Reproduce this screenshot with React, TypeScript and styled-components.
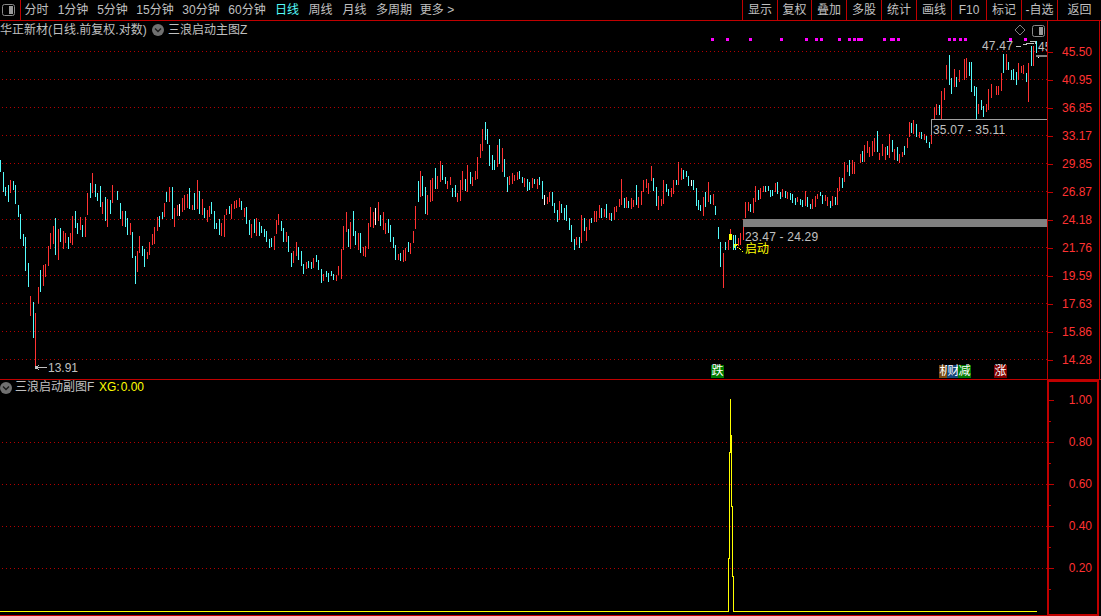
import React from 'react';
import styled, { createGlobalStyle } from 'styled-components';

const RED_LINE = '#c00000';
const GREY_TEXT = '#c0c0c0';
const FONT = '"Liberation Sans", "Noto Sans CJK SC", sans-serif';

const Global = createGlobalStyle`
  html, body { margin: 0; padding: 0; background: #000; }
  body { font-family: ${FONT}; font-size: 12px; color: ${GREY_TEXT}; }
`;

const Page = styled.div`
  width: 1101px;
  height: 616px;
  background: #000;
  display: flex;
  flex-direction: column;
  overflow: hidden;
`;

const Toolbar = styled.div`
  height: 20px;
  flex: none;
  display: flex;
  align-items: stretch;
  border-bottom: 1px solid ${RED_LINE};
`;

const ToggleSlot = styled.div`
  width: 21px;
  flex: none;
  display: flex;
  align-items: center;
  padding-left: 2px;
  box-sizing: border-box;
  border-right: 1px solid ${RED_LINE};
`;

const Tab = styled.div<{ $w: number; $active?: boolean }>`
  width: ${p => p.$w}px;
  flex: none;
  text-align: center;
  line-height: 20px;
  white-space: nowrap;
  color: ${p => (p.$active ? '#54fcfc' : GREY_TEXT)};
`;

const Spacer = styled.div`
  flex: 1;
`;

const ToolButton = styled.div<{ $w: number }>`
  width: ${p => p.$w}px;
  flex: none;
  box-sizing: border-box;
  border-left: 1px solid ${RED_LINE};
  text-align: center;
  line-height: 20px;
  white-space: nowrap;
`;

const Panel = styled.div`
  display: flex;
  height: 359px;
  flex: none;
  padding-right: 1px;
  border-bottom: 1px solid ${RED_LINE};
  box-sizing: border-box;
`;

const SubPanel = styled.div`
  display: flex;
  flex: 1;
  padding-right: 2px;
  min-height: 0;
`;

const Plot = styled.div`
  position: relative;
  width: 1047px;
  flex: none;
  overflow: hidden;
`;

const SubPlot = styled(Plot)`
  border-bottom: 1px solid ${RED_LINE};
`;

const Canvas = styled.svg`
  position: absolute;
  left: 0;
  top: 0;
  display: block;
`;

const Legend = styled.div`
  position: relative;
  display: flex;
  align-items: center;
  height: 18px;
  white-space: nowrap;
  line-height: 18px;
`;

const SubLegend = styled(Legend)`
  height: 15px;
  line-height: 15px;
`;

const StockName = styled.span`
  width: 152px;
`;

const IndicatorName = styled.span`
  margin-left: 4px;
`;

const SubName = styled.span`
  margin-left: 3px;
  width: 84px;
`;

const Value = styled.span`
  color: #ffff00;
  margin-right: 1px;
`;

const PriceAxis = styled.div`
  width: 53px;
  flex: none;
  box-sizing: border-box;
  border-left: 1px solid ${RED_LINE};
  border-right: 1px solid ${RED_LINE};
  padding: 24px 7px 0 0;
`;

const SubAxis = styled.div`
  width: 52px;
  flex: none;
  box-sizing: border-box;
  border: 2px solid ${RED_LINE};
  padding: 11px 5px 0 0;
`;

const PriceTick = styled.div`
  position: relative;
  height: 28px;
  line-height: 14px;
  text-align: right;
  color: #ff3232;
  &::before {
    content: '';
    position: absolute;
    left: 0;
    top: 7px;
    width: 5px;
    height: 1px;
    background: ${RED_LINE};
  }
`;

const SubTick = styled(PriceTick)`
  height: 42px;
  &::after {
    content: '';
    position: absolute;
    left: 0;
    top: 28px;
    width: 2px;
    height: 1px;
    background: ${RED_LINE};
  }
`;

const Marker = styled.div<{ $x: number; $bg: string }>`
  position: absolute;
  left: ${p => p.$x}px;
  top: 344px;
  width: 13px;
  height: 13px;
  background: ${p => p.$bg};
  color: #fff;
  font-size: 12px;
  line-height: 13px;
  text-align: center;
`;

const CornerIcon = styled.div`
  position: absolute;
  left: 1032px;
  top: 4px;
  display: flex;
`;

const PriceNote = styled.text<{ $color?: string; $spaced?: boolean }>`
  font-family: ${FONT};
  font-size: 12px;
  letter-spacing: ${p => (p.$spaced ? '0.2px' : '0')};
  fill: ${p => p.$color || GREY_TEXT};
`;

const PanelIcon = () => (
  <svg width="13" height="12" viewBox="0 0 13 12">
    <rect x="0.5" y="0.5" width="12" height="11" rx="2" fill="none" stroke="#8a8a8a" />
    <rect x="7" y="2" width="4" height="8" fill="#9a9a9a" />
  </svg>
);

const ChevronCircle = () => (
  <svg width="12" height="12" viewBox="0 0 12 12">
    <circle cx="6" cy="6" r="6" fill="#707070" />
    <path d="M3 4.6 L6 7.6 L9 4.6" fill="none" stroke="#1a1a1a" strokeWidth="1.4" />
  </svg>
);

type Bar = { x: number; t: number; b: number; c: string };
const COLORS: Record<string, string> = { c: '#54fcfc', r: '#ff3232', w: '#ffffff' };

const seg = (ox: number, oy: number, s: string): Bar[] =>
  s.trim().split(/\s+/).map(tok => {
    const m = tok.match(/^(\d+):(-?\d+)\/(-?\d+)([crw])$/)!;
    return {
      x: ox + Math.floor(+m[1] / 3),
      t: oy + Math.round(+m[2] / 3),
      b: oy + Math.round(+m[3] / 3),
      c: COLORS[m[4]],
    };
  });

const BARS: Bar[] = [
  ...seg(0, 150, `1:30/65c 10:65/125c 16:110/138c 25:105/155c 31:90/130r 40:92/120c 46:105/162c 55:165/200c 61:192/268c 70:252/288c 76:262/362c 85:340/412c 91:438/497r 100:456/563c 106:490/648r 115:412/461r 121:360/426c 130:345/407r 136:342/380r 145:288/348r 151:249/297r 160:228/282r 166:205/314c 175:238/330r 181:235/275c 190:244/296r 196:250/280r 205:262/297c 211:250/280r 217:198/285r 226:183/235c 232:220/252c 241:200/240r 247:225/261c 256:202/261r 262:130/194r 271:98/143c 277:70/130r 286:102/140c 292:128/152c 301:108/172c 307:155/192r 316:142/212c 322:148/230r 331:150/192c 337:105/160r 352:124/150c 361:160/206c 367:183/228r 376:183/232c 382:205/255c 391:220/255r 397:246/325c 406:318/401c 412:303/365r 418:258/310r 427:289/318c 433:298/351c 442:306/327r 448:277/316r 457:252/284r 463:232/282r 472:201/242r 478:198/230c 487:185/208c 493:160/200r 500:125/155c 508:112/155r 517:111/208c 523:175/230r 532:165/198r 538:163/197w 547:144/185r 553:135/180r 562:132/175r 568:115/176c 577:165/180r 583:130/180c 592:90/178r 598:124/193c 607:148/195r 613:174/204c 622:180/216r 628:168/200r 634:156/192c 643:183/236c 649:220/236c 658:208/256c 664:220/258r 673:195/260r 679:178/195r 688:168/192c 694:162/207r 703:152/176r 709:150/175r 718:143/172r`),
  ...seg(240, 110, `4:273/300c 13:294/320r 19:291/342c 28:330/375c 34:342/384r 43:327/369c 49:324/378r 58:336/378c 64:348/370c 73:357/381c 79:362/396c 88:387/414c 94:384/411c 103:378/420r 109:330/372r 115:312/345r 124:333/363c 130:354/396c 139:366/396r 145:378/426c 154:429/471c 160:423/459r 169:396/438r 175:411/450c 184:423/468c 190:462/492c 199:456/477r 205:453/474c 214:456/477c 220:444/474r 229:435/456c 235:450/480c 244:477/519c 250:492/513r 259:483/501c 265:489/516c 274:483/498c 280:492/510c 289:495/513r 295:468/495r 304:417/507r 310:348/420r 319:306/366r 325:357/411c 331:336/417r 340:303/378c 346:363/405c 355:369/420r 361:369/429c 370:411/438r 376:408/441r 385:339/417r 391:291/351r 400:306/354r 406:294/345w 415:276/333r 421:315/348c 430:306/360r 436:339/372r 445:327/369c 451:345/396c 460:381/414c 466:405/450c 475:432/450r 481:429/453c 490:420/456r 496:414/453r 505:396/426c 511:399/432r 520:363/399r 526:288/357r 535:213/276c 541:183/261r 547:198/258c 556:231/312c 562:255/315r 571:210/276r 577:204/273r 586:174/237c 592:198/237r 601:153/216r 607:165/210c 616:201/222c 622:213/237r 631:201/225r 637:234/261c 646:225/261c 652:249/276r 661:210/273r 667:183/240r 676:207/243c 682:165/246r 691:186/222c 697:201/228r 706:183/210r 712:141/207r`),
  ...seg(480, 110, `1:102/144r 7:57/123r 16:36/90c 22:57/102c 28:105/168c 37:135/180c 43:150/180c 52:105/171r 58:87/162c 67:114/186r 73:147/201c 82:201/246c 88:198/225r 97:189/222r 103:195/213r 112:186/210r 118:183/207c 127:201/219c 133:204/231r 142:207/243c 148:216/240c 157:204/234r 163:207/222c 172:207/237r 178:201/225c 187:213/267c 193:255/285w 202:261/282r 208:246/276r 217:246/288c 223:279/309c 232:300/336c 238:273/330r 244:282/309c 253:294/330c 259:285/333c 268:324/360c 274:345/396c 283:387/420c 289:381/405r 298:381/414c 304:315/399r 313:324/363c 319:351/393r 328:327/360r 334:324/339c 343:303/336r 349:303/336r 358:285/324r 364:294/324c 373:297/321r 379:282/324c 388:309/330r 394:309/333c 403:291/330r 409:288/306r 418:267/291r 424:207/285r 433:264/294c 439:261/294r 445:273/294c 454:264/297r 460:270/291r 469:225/285c 475:261/294r 484:243/285r 490:210/246r 499:207/234r 505:219/252r 514:168/213r 520:204/243c 529:231/288c 535:258/300r 544:267/288r 550:210/282r 559:222/246c 565:237/258c 574:234/261r 580:210/252r 589:210/225c 595:156/225r 604:174/210r 610:180/207c 619:183/201c 625:198/228c 634:210/228w 640:210/240c 649:234/288c 655:270/300c 661:285/303c 670:261/318r 676:246/291c 685:216/276r 691:255/282c 700:252/285r 706:288/315c 715:351/387c`),
  ...seg(680, 170, `121:216/291c 130:249/354r 136:216/240c 145:210/240r 151:177/210r 160:195/240c 166:195/240c 175:204/228r 181:189/225r 190:170/210r 196:96/144r 205:96/123r 211:102/126c 220:84/129r 226:48/96r 235:60/90c 241:54/87r 250:48/66r 256:48/66c 265:48/63c 271:60/81c 276:60/78c 285:39/66r 291:36/72c 300:66/87c 306:57/81r 316:63/84c 322:66/87r 331:69/90c 337:72/99c 346:84/105c 352:81/96r 361:87/105c 367:90/111c 376:63/108r 382:81/111c 391:102/117c 397:87/117r 406:78/111r 412:72/87r 421:66/78c 427:75/102c 436:75/93r 442:81/108r 451:93/114c 457:78/108r 466:81/105c 472:54/105r 478:21/63r 487:24/54c 493:-24/36r 502:-15/6r 508:-30/18c 517:-30/12r 523:-25/12r`),
  ...seg(860, 30, `0:372/400r 7:363/396c 13:345/396r 22:333/369r 28:351/381r 37:333/378r 43:324/366r 52:303/366c 58:369/390r 67:342/378r 76:351/390r 82:348/375c 88:312/384r 97:330/366c 103:357/390r 112:351/393c 118:372/399r 127:366/381r 133:348/375c 142:324/354r 148:276/321r 154:279/309c 160:270/312r 169:282/321c 178:306/324r 184:306/327c 193:312/330r 199:318/339c 208:336/354c 214:315/342r 223:232/267r 229:222/255r 238:225/255c 244:182/267r 253:175/210r 259:105/147r 268:75/165c 274:144/192c 283:117/171r 289:141/171c 298:120/156r 313:87/150r 319:84/144r 328:96/138c 334:96/186c 343:168/198c 349:171/267c 355:222/252r 364:210/240c 370:228/261c 379:222/246r 385:177/240r 394:162/204r 409:168/195r 415:168/195r 424:129/183r 430:72/129c 439:72/120r 445:96/120c 454:120/150c 460:117/150c 469:126/165c 475:99/150r 484:108/129r 490:105/132r 499:129/156c 505:99/216r 514:48/108c 520:48/108r 529:33/69c`),
];

const SQUARES: [number, number][] = [
  [711, 3], [726, 3], [749, 3], [780, 3], [805, 3], [815, 3], [820, 3], [838, 3], [848, 3], [853, 3],
  [857, 6], [883, 3], [890, 5], [897, 3], [948, 3], [953, 3], [959, 3], [964, 3], [1009, 3], [1024, 3],
];

const TABS: [string, number, boolean?][] = [
  ['分时', 31], ['1分钟', 42], ['5分钟', 37], ['15分钟', 48], ['30分钟', 44], ['60分钟', 48],
  ['日线', 32, true], ['周线', 35], ['月线', 33], ['多周期', 46], ['更多  >', 40],
];

const BUTTONS: [string, number][] = [
  ['显示', 35], ['复权', 34], ['叠加', 35], ['多股', 35], ['统计', 35], ['画线', 35],
  ['F10', 35], ['标记', 35], ['-自选', 36], ['返回', 44],
];

const PRICE_TICKS = ['45.50', '40.95', '36.85', '33.17', '29.85', '26.87', '24.18', '21.76', '19.59', '17.63', '15.86', '14.28'];
const SUB_TICKS = ['1.00', '0.80', '0.60', '0.40', '0.20'];
const SUB_GRID = [442, 484, 526, 568];

const GridLine = ({ y }: { y: number }) => (
  <line x1="2" x2="1047" y1={y + 0.5} y2={y + 0.5} stroke="#b40000" strokeDasharray="1 3" />
);

const MainChart = () => (
  <Canvas width="1047" height="358" viewBox="0 21 1047 358" shapeRendering="crispEdges">
    {PRICE_TICKS.map((_, i) => <GridLine key={i} y={51 + 28 * i} />)}
    {SQUARES.map(([x, w]) => <rect key={x} x={x} y="38" width={w} height="3" fill="#ff00ff" />)}
    {BARS.map((b, i) => <rect key={i} x={b.x} y={b.t} width="1" height={Math.max(1, b.b - b.t)} fill={b.c} />)}
    <rect x="743" y="219" width="304" height="8" fill="#808080" />
    <rect x="729" y="234" width="3" height="6" fill="#ffff00" />
    <PriceNote x="745" y="241" $spaced>23.47 - 24.29</PriceNote>
    <path d="M734.5 244 L743 252" stroke="#ffff00" strokeDasharray="1 1" fill="none" />
    <path d="M734 248 V244 H738" stroke="#ffff00" fill="none" />
    <PriceNote x="745" y="253" $color="#ffff00">启动</PriceNote>
    <rect x="931" y="119" width="116" height="1" fill="#a0a0a0" />
    <rect x="931" y="119" width="1" height="16" fill="#a0a0a0" />
    <PriceNote x="933" y="134" $spaced>35.07 - 35.11</PriceNote>
    <PriceNote x="982" y="50" $spaced>47.47</PriceNote>
    <path d="M1016 46 H1021 M1023 45 L1030 43 H1034 M1030 41 H1035 V44" stroke="#c0c0c0" fill="none" />
    <PriceNote x="1038" y="51">45</PriceNote>
    <rect x="1036" y="55" width="11" height="2" fill="#808080" />
    <rect x="1038" y="57" width="1" height="1" fill="#ffffff" />
    <rect x="35" y="366" width="2" height="3" fill="#c0c0c0" />
    <path d="M36 367.5 H47 M39 365 L36 367.5 L39 370" stroke="#c0c0c0" fill="none" />
    <PriceNote x="48" y="372">13.91</PriceNote>
    <path d="M1020 25 L1025 30 L1020 35 L1015 30 Z" stroke="#808080" fill="none" shapeRendering="auto" />
  </Canvas>
);

const SubChart = () => (
  <Canvas width="1047" height="236" viewBox="0 380 1047 236" shapeRendering="crispEdges">
    {SUB_GRID.map(y => <GridLine key={y} y={y} />)}
    <rect x="730" y="435" width="2" height="17" fill="#ffff00" />
    <path
      d="M0 611.5 H728.5 V558.5 H729.5 V452.5 H730.5 V399 M730.5 399 V435 H731.5 V506.5 H732.5 V576.5 H733.5 V611.5 H1037"
      stroke="#ffff00"
      fill="none"
    />
  </Canvas>
);

export default function App() {
  return (
    <Page>
      <Global />
      <Toolbar>
        <ToggleSlot><PanelIcon /></ToggleSlot>
        {TABS.map(([label, w, active]) => <Tab key={label} $w={w} $active={active}>{label}</Tab>)}
        <Spacer />
        {BUTTONS.map(([label, w]) => <ToolButton key={label} $w={w}>{label}</ToolButton>)}
      </Toolbar>
      <Panel>
        <Plot>
          <MainChart />
          <Legend>
            <StockName>华正新材(日线.前复权.对数)</StockName>
            <ChevronCircle />
            <IndicatorName>三浪启动主图Z</IndicatorName>
          </Legend>
          <CornerIcon><PanelIcon /></CornerIcon>
          <Marker $x={711} $bg="#007a00">跌</Marker>
          <Marker $x={939} $bg="#7a4a10">机</Marker>
          <Marker $x={947} $bg="#14467a">财</Marker>
          <Marker $x={958} $bg="#007a00">减</Marker>
          <Marker $x={994} $bg="#800000">涨</Marker>
        </Plot>
        <PriceAxis>
          {PRICE_TICKS.map(t => <PriceTick key={t}>{t}</PriceTick>)}
        </PriceAxis>
      </Panel>
      <SubPanel>
        <SubPlot>
          <SubChart />
          <SubLegend>
            <ChevronCircle />
            <SubName>三浪启动副图F</SubName>
            <Value>XG:</Value>
            <Value>0.00</Value>
          </SubLegend>
        </SubPlot>
        <SubAxis>
          {SUB_TICKS.map(t => <SubTick key={t}>{t}</SubTick>)}
        </SubAxis>
      </SubPanel>
    </Page>
  );
}
